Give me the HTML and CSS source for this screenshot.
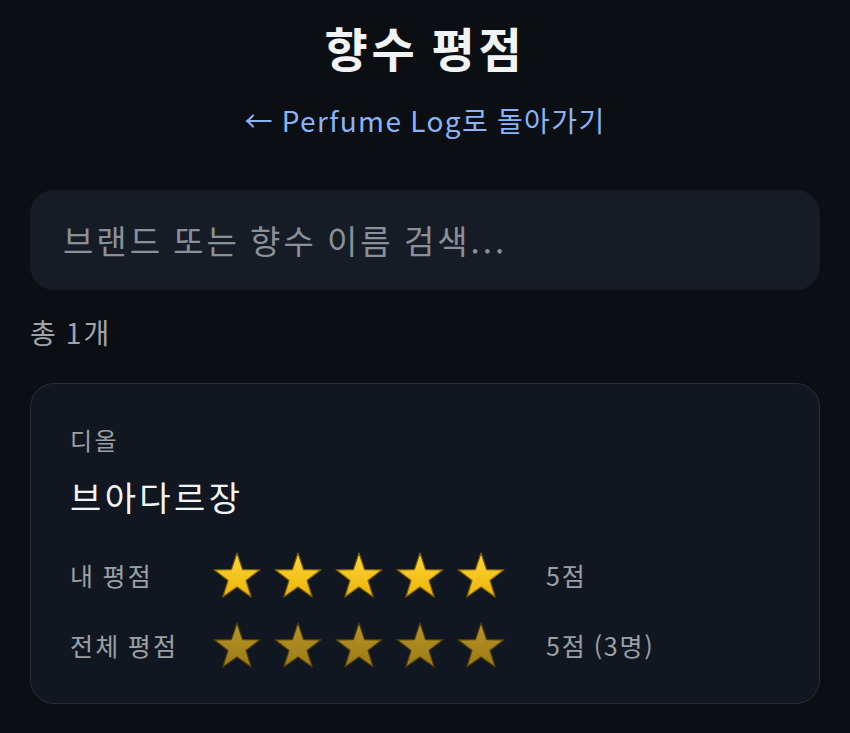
FILE: index.html
```html
<!DOCTYPE html>
<html lang="ko">
<head>
<meta charset="utf-8">
<title>향수 평점</title>
<link rel="stylesheet" href="styles.css">
</head>
<body>
<svg width="0" height="0" class="defs" aria-hidden="true">
  <defs>
    <linearGradient id="gold" x1="0" y1="0" x2="0" y2="1">
      <stop offset="0" stop-color="#ffd83a"/>
      <stop offset="1" stop-color="#eab308"/>
    </linearGradient>
    <linearGradient id="goldDim" x1="0" y1="0" x2="0" y2="1">
      <stop offset="0" stop-color="#b8952a"/>
      <stop offset="1" stop-color="#9c7a14"/>
    </linearGradient>
    <symbol id="star" viewBox="0 0 48 48">
      <path d="M24 2 L29.6 18.6 L47 18.8 L33 29.4 L38.2 46 L24 36 L9.8 46 L15 29.4 L1 18.8 L18.4 18.6 Z"/>
    </symbol>
  </defs>
</svg>
<main class="page">
  <h1 class="title">향수 평점</h1>
  <a class="back" href="#">← Perfume Log로 돌아가기</a>
  <div class="search">브랜드 또는 향수 이름 검색...</div>
  <p class="count">총 1개</p>
  <section class="card">
    <div class="brand">디올</div>
    <div class="name">브아다르장</div>
    <div class="row">
      <span class="label">내 평점</span>
      <span class="stars mine">
        <svg class="star"><use href="#star"/></svg>
        <svg class="star"><use href="#star"/></svg>
        <svg class="star"><use href="#star"/></svg>
        <svg class="star"><use href="#star"/></svg>
        <svg class="star"><use href="#star"/></svg>
      </span>
      <span class="score">5점</span>
    </div>
    <div class="row">
      <span class="label">전체 평점</span>
      <span class="stars all">
        <svg class="star"><use href="#star"/></svg>
        <svg class="star"><use href="#star"/></svg>
        <svg class="star"><use href="#star"/></svg>
        <svg class="star"><use href="#star"/></svg>
        <svg class="star"><use href="#star"/></svg>
      </span>
      <span class="score">5점 (3명)</span>
    </div>
  </section>
</main>
</body>
</html>
```
FILE: styles.css
```css
html, body {
  margin: 0;
  padding: 0;
  background: #0b0e13;
  height: 100%;
}
body {
  font-family: "Noto Sans CJK KR", "Noto Sans", sans-serif;
  color: #e8eaed;
}
.defs {
  position: absolute;
  width: 0;
  height: 0;
}
.page {
  display: flex;
  flex-direction: column;
  padding: 19px 30px 0;
}
.title {
  margin: 0;
  text-align: center;
  font-size: 47px;
  line-height: 56px;
  font-weight: 700;
  letter-spacing: 0.08em;
  word-spacing: -0.08em;
  color: #f1f3f4;
}
.back {
  margin-top: 25px;
  align-self: center;
  font-size: 28px;
  line-height: 40px;
  letter-spacing: 0.05em;
  word-spacing: -0.05em;
  color: #8ab4f8;
  text-decoration: none;
}
.search {
  margin-top: 50px;
  height: 100px;
  box-sizing: border-box;
  padding: 0 33px;
  display: flex;
  align-items: center;
  background: #161c25;
  border-radius: 24px;
  font-size: 33px;
  letter-spacing: 0.09em;
  word-spacing: -0.06em;
  color: #8a9098;
}
.count {
  margin: 24px 0 0;
  font-size: 28px;
  line-height: 36px;
  letter-spacing: 0.08em;
  word-spacing: -0.08em;
  color: #a0a5ab;
}
.card {
  margin-top: 33px;
  height: 321px;
  box-sizing: border-box;
  padding: 39px 39px 0;
  background: #111720;
  border: 1px solid #262e39;
  border-radius: 24px;
  display: flex;
  flex-direction: column;
}
.brand {
  font-size: 24px;
  line-height: 34px;
  letter-spacing: 0.1em;
  color: #9aa0a6;
}
.name {
  margin-top: 17px;
  font-size: 34px;
  line-height: 46px;
  letter-spacing: 0.1em;
  color: #f1f3f4;
}
.row {
  display: flex;
  align-items: center;
  height: 60px;
  margin-top: 10px;
}
.name + .row {
  margin-top: 25px;
}
.label {
  width: 143px;
  font-size: 25px;
  letter-spacing: 0.09em;
  word-spacing: -0.08em;
  color: #9aa0a6;
}
.stars {
  display: flex;
  gap: 13px;
}
.star {
  width: 48px;
  height: 48px;
  stroke-width: 1.2;
  stroke-linejoin: round;
}
.mine .star {
  fill: url(#gold);
  stroke: #7a5a00;
}
.all .star {
  fill: url(#goldDim);
  stroke: #4e3d0a;
}
.score {
  margin-left: 41px;
  font-size: 25px;
  letter-spacing: 0.07em;
  word-spacing: -0.06em;
  color: #9aa0a6;
}
```
